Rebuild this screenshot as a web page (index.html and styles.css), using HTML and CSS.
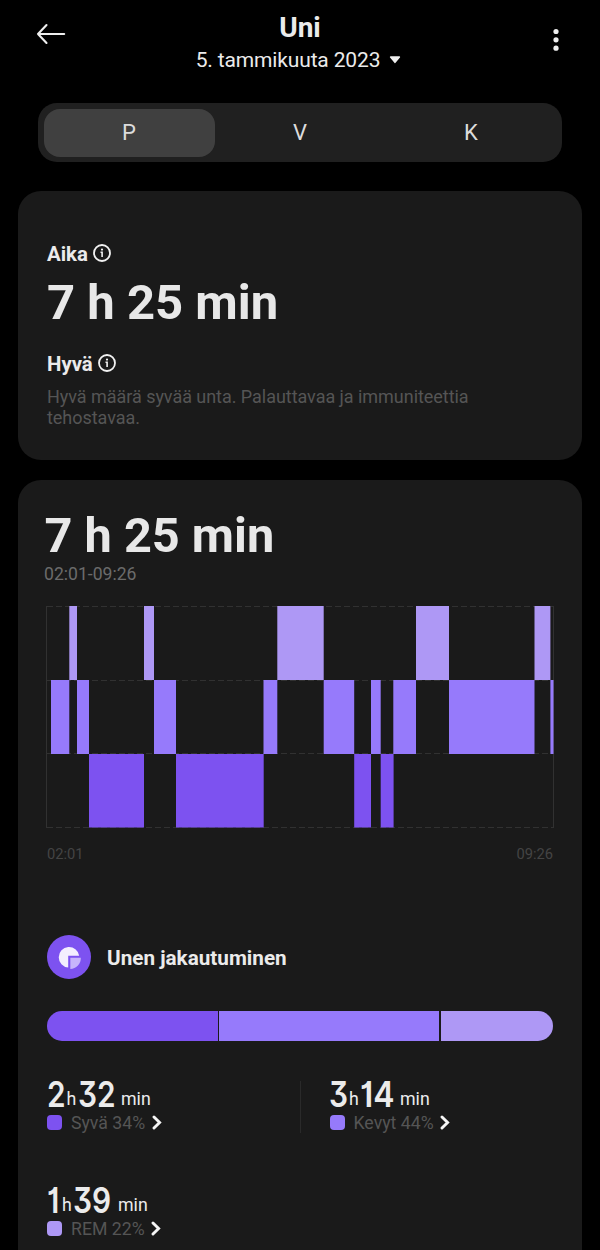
FILE: index.html
```html
<!DOCTYPE html>
<html lang="fi">
<head>
<meta charset="utf-8">
<title>Uni</title>
<link rel="stylesheet" href="styles.css">
</head>
<body>
<div class="screen">
  <header class="header">
    <svg class="back" width="30" height="22" viewBox="0 0 30 22"><path d="M10.5 2 2 11 10.5 20M2 11H28.2" fill="none" stroke="#eee" stroke-width="2.1" stroke-linecap="round" stroke-linejoin="round"/></svg>
    <div class="heading">
      <h1 class="title">Uni</h1>
      <div class="date"><span>5. tammikuuta 2023</span><svg width="12" height="8" viewBox="0 0 12 8"><path d="M1.6 1H10.4L6 6.4Z" fill="#eee" stroke="#eee" stroke-width="1.5" stroke-linejoin="round"/></svg></div>
    </div>
    <svg class="more" width="8" height="24" viewBox="0 0 8 24" fill="#eee"><circle cx="4" cy="3.5" r="2.6"/><circle cx="4" cy="11.8" r="2.6"/><circle cx="4" cy="20.2" r="2.6"/></svg>
  </header>

  <nav class="tabs">
    <div class="tab tab-active">P</div>
    <div class="tab">V</div>
    <div class="tab">K</div>
  </nav>

  <section class="card summary">
    <div class="label"><span class="aika">Aika</span><svg width="18" height="18" viewBox="0 0 18 18"><circle cx="9" cy="9" r="8" fill="none" stroke="#f2f2f2" stroke-width="1.8"/><circle cx="9" cy="5.6" r="1.1" fill="#f2f2f2"/><path d="M7.5 8.3H9.1V13" fill="none" stroke="#f2f2f2" stroke-width="1.6"/></svg></div>
    <div class="total">7 h 25 min</div>
    <div class="label quality"><span class="hyva">Hyvä</span><svg width="18" height="18" viewBox="0 0 18 18"><circle cx="9" cy="9" r="8" fill="none" stroke="#f2f2f2" stroke-width="1.8"/><circle cx="9" cy="5.6" r="1.1" fill="#f2f2f2"/><path d="M7.5 8.3H9.1V13" fill="none" stroke="#f2f2f2" stroke-width="1.6"/></svg></div>
    <p class="description">Hyvä määrä syvää unta. Palauttavaa ja immuniteettia<br>tehostavaa.</p>
  </section>

  <section class="card details">
    <div class="total total-detail">7 h 25 min</div>
    <div class="range">02:01-09:26</div>
    <svg class="chart" width="508" height="223" viewBox="46 605 508 223">
      <g fill="none" stroke="#313131" stroke-width="1">
        <path d="M46.5 606V828M553.5 606V828"/>
        <path stroke-dasharray="6 3" d="M47 606.5H553M47 680.5H553M47 753.5H553M47 827.5H553"/>
      </g>
      <g fill="#ae98f5">
        <path d="M69.3 606H77V680H69.3ZM144 606H154V680H144ZM277.3 606H323.7V680H277.3ZM416 606H449V680H416ZM534.5 606H550.4V680H534.5Z"/>
      </g>
      <g fill="#967afb">
        <path d="M51 680H69.3V754H51ZM77 680H89V754H77ZM154 680H176V754H154ZM263.5 680H277.3V754H263.5ZM323.7 680H354.2V754H323.7ZM371 680H380.7V754H371ZM393.3 680H416V754H393.3ZM449 680H534.5V754H449ZM550.4 680H553.5V754H550.4Z"/>
      </g>
      <g fill="#7d52f0">
        <path d="M89 754H144V827.6H89ZM176 754H263.7V827.6H176ZM354.2 754H371V827.6H354.2ZM380.7 754H393.6V827.6H380.7Z"/>
      </g>
    </svg>
    <div class="axis"><span>02:01</span><span>09:26</span></div>

    <div class="section-title">
      <svg width="44" height="44" viewBox="0 0 44 44"><circle cx="22" cy="22" r="22" fill="#7d52f0"/><path d="M21.2 32.6A10.3 10.3 0 1 1 32.2 20.7H21.2Z" fill="#f3eefe"/><path d="M23.3 22.8H33.8A10.7 10.7 0 0 1 23.3 34Z" fill="#c7b3fb"/></svg>
      <span>Unen jakautuminen</span>
    </div>

    <div class="bar"><div class="deep"></div><div class="light"></div><div class="rem"></div></div>

    <div class="stats">
      <div class="stat">
        <div class="value"><b class="one"><i>2</i></b><span class="h">h</span><b class="two"><i>32</i></b><span class="min">min</span></div>
        <div class="kind"><div class="dot deep"></div><span>Syvä 34%</span><svg width="10" height="15" viewBox="0 0 10 15"><path d="M2 2 7.6 7.5 2 13" fill="none" stroke="#f5f5f5" stroke-width="2.9" stroke-linecap="round"/></svg></div>
      </div>
      <div class="divider"></div>
      <div class="stat">
        <div class="value"><b class="one"><i>3</i></b><span class="h">h</span><b class="two fourteen"><i>14</i></b><span class="min">min</span></div>
        <div class="kind"><div class="dot light"></div><span>Kevyt 44%</span><svg width="10" height="15" viewBox="0 0 10 15"><path d="M2 2 7.6 7.5 2 13" fill="none" stroke="#f5f5f5" stroke-width="2.9" stroke-linecap="round"/></svg></div>
      </div>
      <div class="stat">
        <div class="value"><b class="one narrow"><i>1</i></b><span class="h">h</span><b class="two"><i>39</i></b><span class="min min-rem">min</span></div>
        <div class="kind"><div class="dot rem"></div><span>REM 22%</span><svg width="10" height="15" viewBox="0 0 10 15"><path d="M2 2 7.6 7.5 2 13" fill="none" stroke="#f5f5f5" stroke-width="2.9" stroke-linecap="round"/></svg></div>
      </div>
    </div>
  </section>
</div>
</body>
</html>
```
FILE: styles.css
```css
* { box-sizing: border-box; }
body { margin: 0; background: #000; color: #ebebeb; font-family: Roboto, sans-serif; }
.screen { height: 1250px; overflow: hidden; display: flex; flex-direction: column; padding: 0 18px; }
svg { display: block; flex: none; }

.header { height: 103px; flex: none; display: grid; grid-template-columns: 30px 1fr 30px; padding: 12px 18px 0; }
.back { margin-top: 11px; }
.more { margin: 16px 4px 0 auto; }
.heading { text-align: center; }
.title { margin: 0; font-size: 28px; line-height: 32px; font-weight: 700; }
.date { display: flex; align-items: center; justify-content: center; gap: 9px; margin: 2px 0 0 -3px; font-size: 21px; line-height: 28px; letter-spacing: -.15px; }

.tabs { flex: none; display: grid; grid-template-columns: repeat(3, 1fr); height: 59px; margin: 0 20px 29px; padding: 5.5px; border-radius: 19px; background: #202020; }
.tab { font-size: 22px; line-height: 48px; text-align: center; border-radius: 16px; color: #dcdcdc; }
.tab-active { background: #404040; }

.card { flex: none; background: #1a1a1a; border-radius: 23px; }
.summary { height: 269px; padding: 51px 29px 0; }
.label { display: flex; align-items: center; gap: 5px; height: 24px; font-size: 20.4px; line-height: 24px; font-weight: 700; }
.label svg { margin-top: -2px; }
.total { font-size: 49px; line-height: 58px; font-weight: 700; margin-top: 8px; color: #e8e8e8; white-space: nowrap; }
.quality { margin-top: 20px; }
.description { margin: 10px 0 0; font-size: 18px; line-height: 21px; letter-spacing: -.04px; color: #555; white-space: nowrap; }

.details { margin-top: 20px; height: 800px; padding: 27px 28px 0; }
.total-detail { margin: 0 0 0 -1.5px; font-size: 48.7px; }
.range { margin: -1px 0 0 -2px; font-size: 17.6px; line-height: 20px; color: #6b6b6b; }
.chart { margin-top: 21px; }
.axis { display: flex; justify-content: space-between; margin: 16px 1px 0; font-size: 14.7px; line-height: 20px; color: #444; }
.section-title { display: flex; align-items: center; gap: 16px; height: 44px; margin: 71px 1px 0; font-size: 20.7px; font-weight: 700; }
.section-title span { padding-top: 2px; }

.deep { background: #7d52f0; }
.light { background: #967afb; }
.rem { background: #ae98f5; }
.bar { display: grid; grid-template-columns: 170.5px 220px 1fr; gap: 1.5px; height: 29.5px; margin: 32px 1px 0; border-radius: 15px; overflow: hidden; }

.stats { display: grid; grid-template-columns: 253px 1px 1fr; margin: 40px 0 0 1px; }
.stat { height: 106.5px; }
.divider { height: 52px; background: #2a2a2a; }
.divider + .stat { padding-left: 28.5px; }
.value { display: flex; align-items: baseline; height: 29px; line-height: 27px; margin-bottom: 5px; }
.value b { font-family: Inter, sans-serif; font-size: 35.5px; font-weight: 600; line-height: 27px; font-feature-settings: "cv09", "cv01"; }
.value i { display: inline-block; font-style: normal; transform: scaleX(.84); transform-origin: left; }
.one { width: 19px; margin-left: -.5px; }
.one.narrow { width: 14.5px; }
.two { width: 39.5px; }
.two.fourteen { width: 36px; }
.two.fourteen i { transform: scaleX(.9); }
.h, .min { font-size: 17.8px; line-height: 20px; transform: translateY(-2.5px); }
.h { width: 12px; padding-left: 1px; }
.min { padding-left: 4px; }
.min-rem { padding-left: 5.5px; }
.kind { display: flex; align-items: center; height: 15px; font-size: 17.7px; line-height: 15px; color: #555; }
.kind span { padding-top: 2px; }
.kind svg { margin-left: 6.5px; }
.dot { width: 15px; height: 15px; border-radius: 4px; margin-right: 9px; }
```
